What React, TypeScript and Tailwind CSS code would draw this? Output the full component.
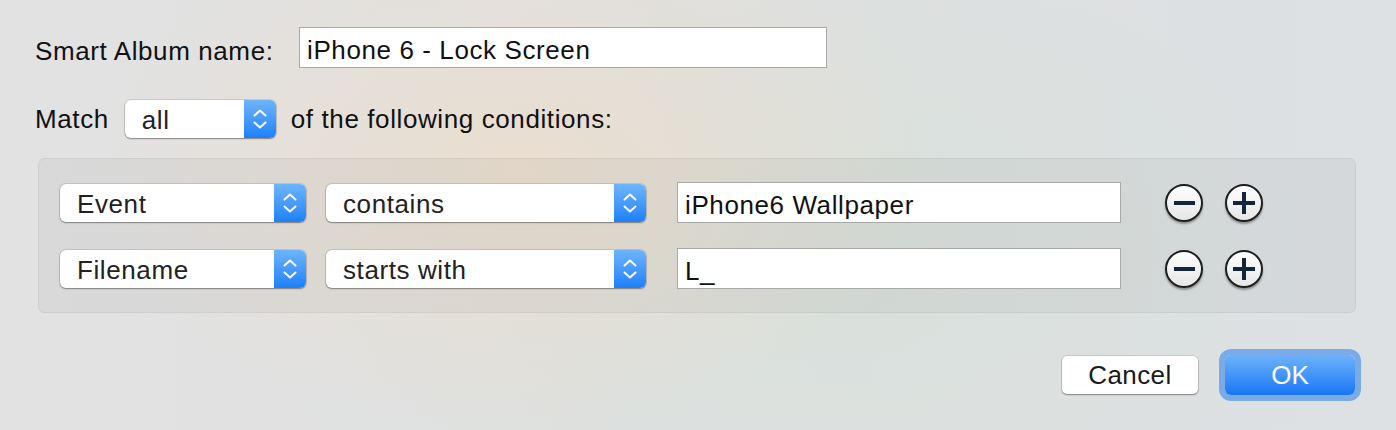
import type { ReactNode } from 'react'

const font = { fontFamily: '"Liberation Sans", Arial, sans-serif' }

const Chevrons = () => (
  <svg width="14" height="22" viewBox="0 0 14 22" fill="none" stroke="white" strokeWidth="2" strokeLinecap="round" strokeLinejoin="round">
    <path d="M1.5 7.5 L7 2.5 L12.5 7.5" />
    <path d="M1.5 14.5 L7 19.5 L12.5 14.5" />
  </svg>
)

const PopUp = ({ label, width }: { label: string; width: string }) => (
  <div
    className={`${width} h-[38px] flex items-stretch rounded-[6px] bg-white shadow-[0_0_0_1px_rgba(0,0,0,0.1),0_1px_1.5px_rgba(0,0,0,0.35)] overflow-hidden`}
  >
    <div className="flex-1 flex items-center pl-[17px] pt-[2px] text-[26px] tracking-[0.6px] text-[#222]">{label}</div>
    <div className="w-[32px] flex items-center justify-center bg-gradient-to-b from-[#6db4fb] to-[#1a80fa]">
      <Chevrons />
    </div>
  </div>
)

const TextField = ({ value, width }: { value: string; width: string }) => (
  <div
    className={`${width} h-[41px] flex items-center bg-white border border-[#a9a9a9] pl-[7px] pt-[5px] text-[26px] tracking-[0.6px] text-[#111]`}
  >
    {value}
  </div>
)

const RoundButton = ({ children }: { children: ReactNode }) => (
  <div className="w-[38px] h-[38px] rounded-full border-2 border-[#1e1e1e] bg-gradient-to-b from-white to-[#e6e6e6] shadow-[0_2px_2px_rgba(0,0,0,0.35)] flex items-center justify-center">
    {children}
  </div>
)

const Minus = () => <div className="w-[21px] h-[4px] bg-[#14263a]" />

const Plus = () => (
  <svg width="22" height="22" viewBox="0 0 22 22">
    <rect x="0" y="9" width="22" height="4" fill="#14263a" />
    <rect x="9" y="0" width="4" height="22" fill="#14263a" />
  </svg>
)

const ConditionRow = ({ field, op, value }: { field: string; op: string; value: string }) => (
  <div className="flex items-center h-[41px]">
    <PopUp label={field} width="w-[246px]" />
    <div className="ml-[20px]">
      <PopUp label={op} width="w-[320px]" />
    </div>
    <div className="ml-[31px]">
      <TextField value={value} width="w-[444px]" />
    </div>
    <div className="ml-[44px] flex gap-[22px]">
      <RoundButton>
        <Minus />
      </RoundButton>
      <RoundButton>
        <Plus />
      </RoundButton>
    </div>
  </div>
)

export default function App() {
  return (
    <div
      style={font}
      className="w-[1396px] h-[430px] overflow-hidden leading-[30px] bg-[#e1e1e1] bg-[radial-gradient(ellipse_420px_260px_at_520px_170px,rgba(236,222,206,0.9),transparent),radial-gradient(ellipse_500px_300px_at_820px_250px,rgba(214,224,218,0.8),transparent),linear-gradient(90deg,#e2e2e2,#dfe0e0_60%,#dde1e4)] pl-[35px] pt-[27px] text-[#111]"
    >
      {/* name */}
      <div className="flex items-center h-[41px]">
        <div className="w-[264px] pt-[6px] text-[26px] tracking-[0.6px]">Smart Album name:</div>
        <TextField value="iPhone 6 - Lock Screen" width="w-[528px]" />
      </div>

      {/* match */}
      <div className="mt-[31px] flex items-center h-[40px]">
        <span className="text-[26px] tracking-[0.6px]">Match</span>
        <div className="ml-[16px]">
          <PopUp label="all" width="w-[151px]" />
        </div>
        <span className="ml-[15px] text-[26px] tracking-[0.6px]">of the following conditions:</span>
      </div>

      {/* conditions */}
      <div className="mt-[19px] ml-[3px] w-[1318px] h-[155px] rounded-[7px] bg-black/[0.04] border border-black/[0.05] pt-[23px] pl-[21px] flex flex-col gap-[25px]">
        <ConditionRow field="Event" op="contains" value="iPhone6 Wallpaper" />
        <ConditionRow field="Filename" op="starts with" value="L_" />
      </div>

      {/* buttons */}
      <div className="mt-[42px] w-[1320px] flex justify-end items-center gap-[27px]">
        <div className="w-[136px] h-[38px] rounded-[5px] bg-white shadow-[0_0_0_1px_rgba(0,0,0,0.1),0_1px_1.5px_rgba(0,0,0,0.35)] flex items-center justify-center text-[26px] tracking-[0.4px] text-[#1a1a1a]">
          Cancel
        </div>
        <div className="w-[130px] h-[40px] rounded-[6px] bg-gradient-to-b from-[#6cb2fa] to-[#1475f6] shadow-[0_0_0_6px_rgba(88,152,232,0.75)] flex items-center justify-center text-[26px] text-white">
          OK
        </div>
      </div>
    </div>
  )
}
